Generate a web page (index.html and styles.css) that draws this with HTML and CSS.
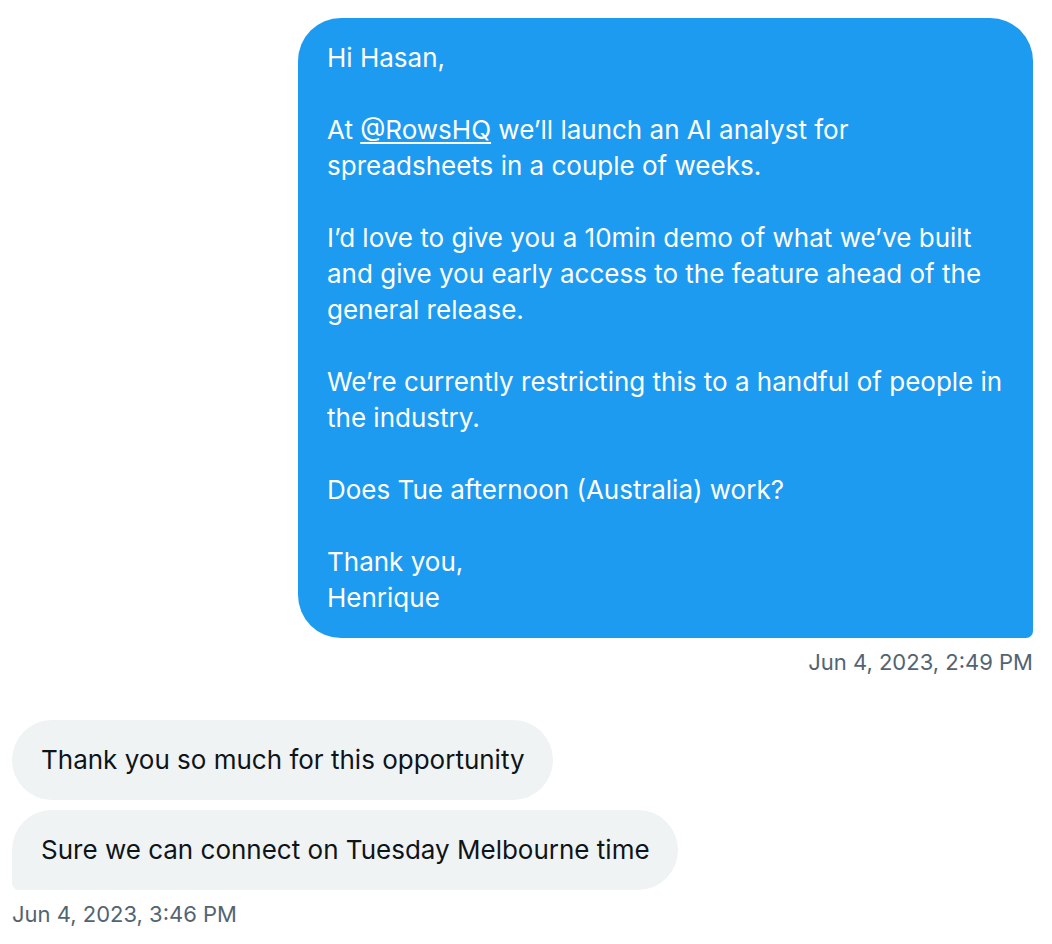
FILE: index.html
```html
<!DOCTYPE html>
<html>
<head>
<meta charset="utf-8">
<link rel="stylesheet" href="styles.css">
</head>
<body>
<div class="thread">
  <div class="group sent">
    <div class="bubble blue">Hi Hasan,<br><br>At <a class="mention" href="#">@RowsHQ</a> we’ll launch an AI analyst for<br>spreadsheets in a couple of weeks.<br><br>I’d love to give you a 10min demo of what we’ve built<br>and give you early access to the feature ahead of the<br>general release.<br><br>We’re currently restricting this to a handful of people in<br>the industry.<br><br>Does Tue afternoon (Australia) work?<br><br>Thank you,<br>Henrique</div>
    <div class="time">Jun 4, 2023, 2:49 PM</div>
  </div>
  <div class="group received">
    <div class="bubble gray first">Thank you so much for this opportunity</div>
    <div class="bubble gray last">Sure we can connect on Tuesday Melbourne time</div>
    <div class="time">Jun 4, 2023, 3:46 PM</div>
  </div>
</div>
</body>
</html>
```
FILE: styles.css
```css
html, body {
  margin: 0;
  padding: 0;
  background: #ffffff;
}
body {
  font-family: Inter, "Noto Sans", "Liberation Sans", sans-serif;
  -webkit-font-smoothing: antialiased;
}
.thread {
  padding: 18px 19px 0 12px;
  display: flex;
  flex-direction: column;
  gap: 43px;
}
.group {
  display: flex;
  flex-direction: column;
  gap: 10px;
}
.sent {
  align-items: flex-end;
}
.received {
  align-items: flex-start;
}
.bubble {
  font-size: 26px;
  line-height: 36px;
  padding: 22px 29px 22px 29px;
  box-sizing: border-box;
  white-space: nowrap;
}
.blue {
  width: 735px;
  background: #1d9bf0;
  color: #ffffff;
  border-radius: 43px 43px 7px 43px;
}
.mention {
  color: #ffffff;
  text-decoration: underline;
  text-underline-offset: 3px;
  text-decoration-thickness: 2px;
}
.gray {
  background: #eff3f4;
  color: #0f1419;
  border-radius: 43px;
  padding-right: 28px;
}
.gray.last {
  border-radius: 43px 43px 43px 7px;
}
.time {
  font-size: 22px;
  line-height: 29px;
  color: #536471;
}
```
